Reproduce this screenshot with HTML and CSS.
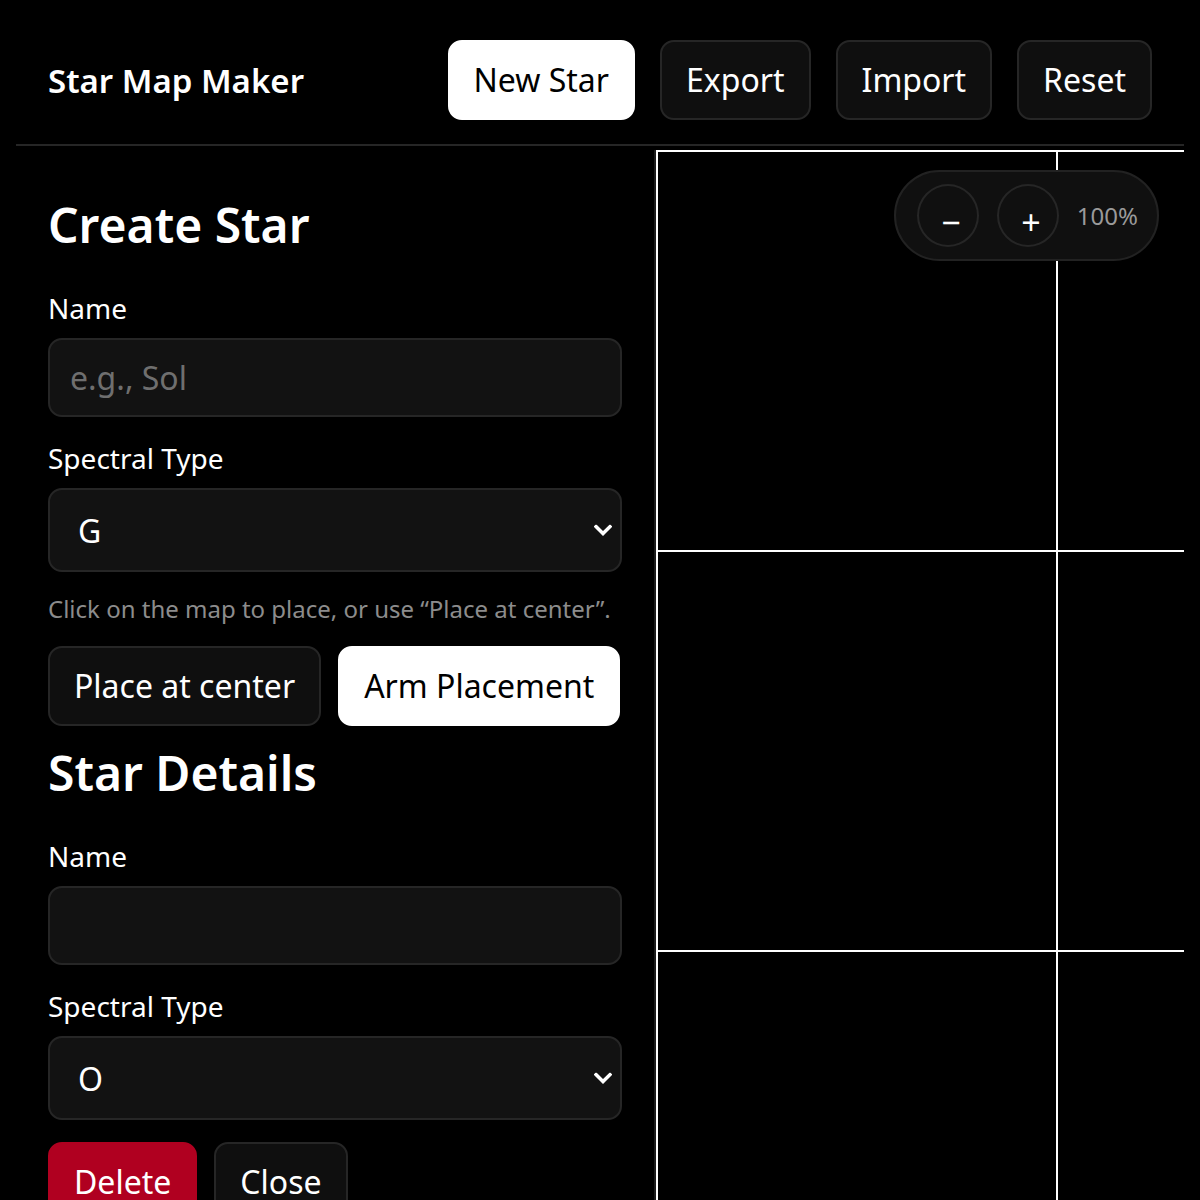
FILE: index.html
```html
<!DOCTYPE html>
<html lang="en">
<head>
    <meta charset="UTF-8">
    <meta name="viewport" content="width=device-width, initial-scale=1.0">
    <title>Star Map Maker</title>
    <link rel="stylesheet" href="styles.css">
</head>
<body>
    <div class="app">
        <header class="topbar">
            <h1 class="brand">Star Map Maker</h1>
            <nav class="toolbar">
                <button class="btn btn-light">New Star</button>
                <button class="btn">Export</button>
                <button class="btn">Import</button>
                <button class="btn">Reset</button>
            </nav>
        </header>

        <main class="workspace">
            <aside class="sidebar">
                <section class="panel">
                    <h2>Create Star</h2>
                    <div class="field">
                        <label for="new-name">Name</label>
                        <input id="new-name" class="input" type="text" placeholder="e.g., Sol">
                    </div>
                    <div class="field">
                        <label for="new-type">Spectral Type</label>
                        <div class="select-wrap">
                            <select id="new-type" class="input select">
                                <option>O</option>
                                <option>B</option>
                                <option>A</option>
                                <option>F</option>
                                <option selected>G</option>
                                <option>K</option>
                                <option>M</option>
                            </select>
                            <svg class="chevron" viewBox="0 0 18 12" width="18" height="12">
                                <path d="M2 2l7 7 7-7" fill="none" stroke="#fff" stroke-width="3.5" stroke-linecap="square"/>
                            </svg>
                        </div>
                    </div>
                    <p class="hint">Click on the map to place, or use “Place at center”.</p>
                    <div class="actions">
                        <button class="btn">Place at center</button>
                        <button class="btn btn-light">Arm Placement</button>
                    </div>
                </section>

                <section class="panel">
                    <h2>Star Details</h2>
                    <div class="field">
                        <label for="edit-name">Name</label>
                        <input id="edit-name" class="input" type="text">
                    </div>
                    <div class="field">
                        <label for="edit-type">Spectral Type</label>
                        <div class="select-wrap">
                            <select id="edit-type" class="input select">
                                <option selected>O</option>
                                <option>B</option>
                                <option>A</option>
                                <option>F</option>
                                <option>G</option>
                                <option>K</option>
                                <option>M</option>
                            </select>
                            <svg class="chevron" viewBox="0 0 18 12" width="18" height="12">
                                <path d="M2 2l7 7 7-7" fill="none" stroke="#fff" stroke-width="3.5" stroke-linecap="square"/>
                            </svg>
                        </div>
                    </div>
                    <div class="actions">
                        <button class="btn btn-danger">Delete</button>
                        <button class="btn">Close</button>
                    </div>
                </section>
            </aside>

            <div class="map">
                <div class="zoom">
                    <button class="zoom-btn">−</button>
                    <button class="zoom-btn">+</button>
                    <span class="zoom-level">100%</span>
                </div>
            </div>
        </main>
    </div>
</body>
</html>
```

FILE: styles.css
```css
/* Base */
* {
    margin: 0;
    padding: 0;
    box-sizing: border-box;
}

body {
    background: #000;
    color: #fff;
    font-family: "Noto Sans", "Liberation Sans", sans-serif;
    overflow: hidden;
}

.app {
    padding: 16px 16px 0;
}

/* Top bar */
.topbar {
    display: flex;
    align-items: center;
    justify-content: space-between;
    padding: 24px 32px;
    border-bottom: 2px solid #262626;
}

.brand {
    font-size: 33px;
    font-weight: 600;
}

.toolbar {
    display: flex;
    gap: 25px;
}

/* Buttons */
.btn {
    font-family: inherit;
    font-size: 32px;
    line-height: 44px;
    padding: 16px 24px;
    border: 2px solid #262626;
    border-radius: 14px;
    background: #0f0f0f;
    color: #fff;
    cursor: pointer;
}

.btn-light {
    background: #fff;
    border-color: #fff;
    color: #000;
}

.btn-danger {
    background: #b00020;
    border-color: #b00020;
}

/* Layout */
.workspace {
    display: grid;
    grid-template-columns: 640px 1fr;
    margin-top: 4px;
}

.sidebar {
    padding: 46px 32px 40px;
    border-right: 2px solid #1c1c1c;
    display: flex;
    flex-direction: column;
    gap: 18px;
}

.panel {
    display: flex;
    flex-direction: column;
    gap: 22px;
}

.panel h2 {
    font-size: 48px;
    font-weight: 600;
    line-height: 58px;
    margin-bottom: 13px;
}

.field {
    display: flex;
    flex-direction: column;
    gap: 11px;
}

.field label {
    font-size: 28px;
    line-height: 38px;
}

.input {
    width: 100%;
    height: 79px;
    padding: 0 20px;
    font-family: inherit;
    font-size: 32px;
    color: #fff;
    background: #121212;
    border: 2px solid #262626;
    border-radius: 14px;
    outline: none;
}

.input::placeholder {
    color: #6f6f6f;
}

.select-wrap {
    position: relative;
}

.select {
    height: 84px;
    padding: 0 28px;
    appearance: none;
}

.chevron {
    position: absolute;
    right: 10px;
    top: 50%;
    transform: translateY(-45%);
    pointer-events: none;
}

.hint {
    font-size: 24px;
    line-height: 30px;
    color: #8c8c8c;
}

.actions {
    display: flex;
    gap: 17px;
}

/* Map canvas */
.map {
    position: relative;
    min-height: 1100px;
    background-image:
        linear-gradient(to right, #fff 0 2px, transparent 2px),
        linear-gradient(to bottom, #fff 0 2px, transparent 2px);
    background-size: 400px 400px;
}

.zoom {
    position: absolute;
    top: 20px;
    right: 25px;
    display: flex;
    align-items: center;
    gap: 18px;
    padding: 12px 19px 12px 21px;
    background: #101010;
    border: 2px solid #222;
    border-radius: 46px;
}

.zoom-btn {
    width: 62px;
    height: 63px;
    border-radius: 50%;
    border: 2px solid #262626;
    background: #101010;
    color: #fff;
    font-family: inherit;
    font-size: 34px;
    line-height: 1;
    padding: 12px 0 0 6px;
}

.zoom-level {
    font-size: 24px;
    color: #9a9a9a;
}
```
